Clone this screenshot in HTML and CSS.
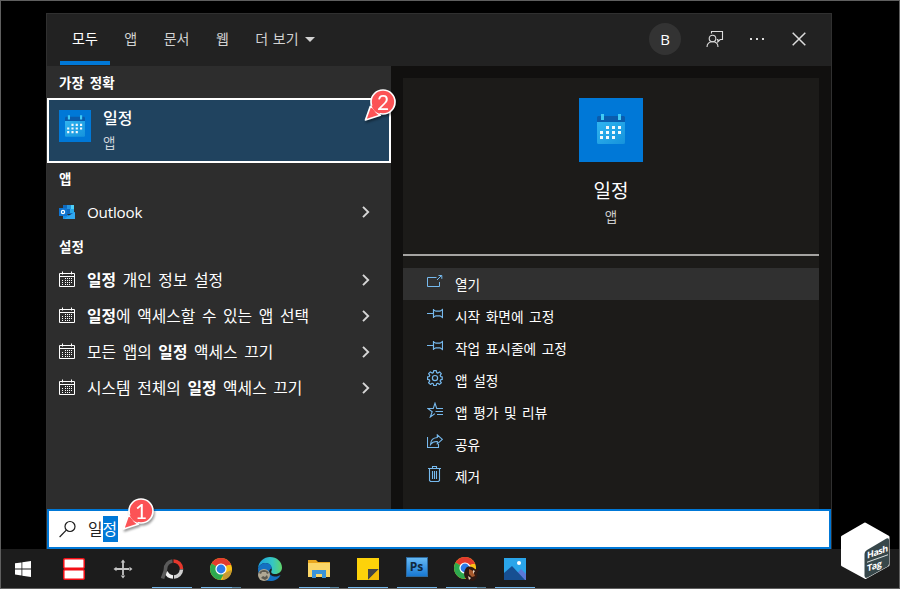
FILE: index.html
```html
<!DOCTYPE html>
<html lang="ko">
<head>
  <meta charset="UTF-8">
  <meta name="viewport" content="width=device-width, initial-scale=1.0">
  <title>일정</title>
  <link rel="stylesheet" href="styles.css">
</head>
<body>

<!-- Shared icons -->
<svg class="defs" width="0" height="0">
  <defs>
    <linearGradient id="calBody" x1="0" y1="0" x2="1" y2="1">
      <stop offset="0" stop-color="#30b4f0"/><stop offset="1" stop-color="#1593dc"/>
    </linearGradient>
    <linearGradient id="edgeTop" x1="0" y1="0" x2="1" y2="0">
      <stop offset="0" stop-color="#1ba0e0"/><stop offset="0.6" stop-color="#35c6c4"/><stop offset="1" stop-color="#5fd56b"/>
    </linearGradient>
    <symbol id="calApp" viewBox="0 0 28 30">
      <path d="M0 8h28v20.500a1.500 1.500 0 0 1-1.500 1.500h-25a1.500 1.500 0 0 1-1.500-1.500z" fill="url(#calBody)"/>
      <path d="M1 2h26l1 1v5H0V3z" fill="#0a5cad"/>
      <path d="M4 0h3v6H4zM21 0h3v6h-3z" fill="#3fcaf5"/>
      <path d="M9 12h3v3H9zM15 12h3v3h-3zM21 12h3v3h-3zM3 17h3v3H3zM9 17h3v3H9zM15 17h3v3h-3zM21 17h3v3h-3zM3 22h3v3H3zM9 22h3v3H9zM15 22h3v3h-3z" fill="#f3f8fb"/>
    </symbol>
    <symbol id="cal" viewBox="0 0 16 16">
      <path d="M.5 2.500h15v13H.5zM.5 5.500h15M3.500 0.500v3M12.500 .5v3" fill="none" stroke="#fff"/>
      <path d="M6 7h1v1H6zM8 7h1v1H8zM10 7h1v1h-1zM12 7h1v1h-1zM3 9h1v1H3zM6 9h1v1H6zM8 9h1v1H8zM10 9h1v1h-1zM12 9h1v1h-1zM3 11h1v1H3zM6 11h1v1H6zM8 11h1v1H8zM10 11h1v1h-1zM12 11h1v1h-1zM3 13h1v1H3zM6 13h1v1H6zM8 13h1v1H8zM10 13h1v1h-1z" fill="#fff"/>
    </symbol>
    <symbol id="chev" viewBox="0 0 8 12">
      <path d="M1 .8l5.200 5.200L1 11.200" fill="none" stroke="#d6d6d6" stroke-width="1.900"/>
    </symbol>
    <symbol id="pin" viewBox="0 0 16 16">
      <path d="M0 7.500h6M6.500 3v9M6.500 4l2.500 1.200h4l2.500-1.700v8L13 9.800H9L6.500 11" fill="none" stroke="#76b9ed" stroke-width="1.200"/>
    </symbol>
    <symbol id="chrome" viewBox="0 0 24 24">
      <circle cx="12" cy="12" r="11" fill="#fbc116"/>
      <path d="M12 12L2.500 6.500A11 11 0 0 1 21.500 6.500z" fill="#e33b2e"/>
      <path d="M2.500 6.500a11 11 0 0 0 9 16.500L16.300 14.500 12 12z" fill="#2da94f"/>
      <path d="M12 6.500h9.500l.5 1.500h-6z" fill="#e33b2e"/>
      <circle cx="12" cy="12" r="5.600" fill="#fff"/>
      <circle cx="12" cy="12" r="4.400" fill="#2d7bea"/>
    </symbol>
    <symbol id="marker" viewBox="0 0 36 36">
      <circle cx="22" cy="15" r="12" fill="#fc5356" stroke="#fff" stroke-width="1.700"/>
      <path d="M4.500 33L9.300 19.500l3 1.500 3 4 4 3.300z" fill="#fc5356" stroke="#fff" stroke-width="1.700" stroke-linejoin="round"/>
      <path d="M10.500 18.500a12 12 0 0 0 8 8.200l3-8z" fill="#fc5356"/>
    </symbol>
  </defs>
</svg>

<div class="screen">
  <div class="desktop">

    <!-- Search window -->
    <div class="search-window">
      <div class="header">
        <div class="tabs">
          <span class="tab active">모두</span>
          <span class="tab">앱</span>
          <span class="tab">문서</span>
          <span class="tab">웹</span>
          <span class="tab">더 보기<i class="caret"></i></span>
        </div>
        <div class="tools">
          <span class="avatar">B</span>
          <svg class="feedback" width="18" height="18" viewBox="0 0 18 18" fill="none" stroke="#dcdcdc" stroke-width="1.100">
            <path d="M5.500 3.500v-2h11v8h-2.300l-2.400 2.500V9.500h-1"/>
            <circle cx="6.500" cy="8.500" r="3.300"/>
            <path d="M1 17c0-3.300 2.200-5.200 5.500-5.200S12 13.700 12 17"/>
          </svg>
          <svg class="dots" width="16" height="4" viewBox="0 0 16 4" fill="#dcdcdc"><path d="M1 1h2v2H1zM7 1h2v2H7zM13 1h2v2h-2z"/></svg>
          <svg width="14" height="14" viewBox="0 0 14 14" stroke="#dcdcdc" stroke-width="1.500"><path d="M.7 .7l12.600 12.600M13.300 .7L.7 13.300"/></svg>
        </div>
      </div>

      <div class="panes">
        <!-- Results -->
        <div class="results">
          <h2 class="group">가장 정확</h2>
          <div class="best">
            <span class="tile"><svg width="20" height="22"><use href="#calApp"/></svg></span>
            <div class="best-text">
              <span class="best-name">일정</span>
              <span class="best-type">앱</span>
            </div>
          </div>

          <h2 class="group group-app">앱</h2>
          <div class="row">
            <svg width="16" height="16" viewBox="0 0 16 16">
              <path d="M4 1h11v9H4z" fill="#1069bd"/>
              <path d="M8 1h4v4H8z" fill="#2394df"/><path d="M12 1h3v4h-3z" fill="#4fd0f7"/><path d="M11 5h4v4h-4z" fill="#28a8ea"/>
              <path d="M4 8l6 3.500L16 8v7H4z" fill="#1b8fe6"/><path d="M16 8v7H5z" fill="#31a7f0"/>
              <path d="M0 4h8v8H0z" fill="#0f74d1"/>
              <circle cx="4" cy="8" r="1.600" fill="none" stroke="#fff" stroke-width="1.200"/>
            </svg>
            <span class="label latin">Outlook</span>
            <svg width="8" height="12"><use href="#chev"/></svg>
          </div>

          <h2 class="group">설정</h2>
          <div class="row">
            <svg class="row-icon" width="16" height="16"><use href="#cal"/></svg>
            <span class="label"><b>일정</b> 개인 정보 설정</span>
            <svg width="8" height="12"><use href="#chev"/></svg>
          </div>
          <div class="row">
            <svg class="row-icon" width="16" height="16"><use href="#cal"/></svg>
            <span class="label"><b>일정</b>에 액세스할 수 있는 앱 선택</span>
            <svg width="8" height="12"><use href="#chev"/></svg>
          </div>
          <div class="row">
            <svg class="row-icon" width="16" height="16"><use href="#cal"/></svg>
            <span class="label">모든 앱의 <b>일정</b> 액세스 끄기</span>
            <svg width="8" height="12"><use href="#chev"/></svg>
          </div>
          <div class="row">
            <svg class="row-icon" width="16" height="16"><use href="#cal"/></svg>
            <span class="label">시스템 전체의 <b>일정</b> 액세스 끄기</span>
            <svg width="8" height="12"><use href="#chev"/></svg>
          </div>
        </div>

        <!-- Details of the selected app -->
        <div class="details">
          <div class="hero">
            <span class="tile tile-big"><svg width="28" height="30"><use href="#calApp"/></svg></span>
            <span class="hero-name">일정</span>
            <span class="hero-type">앱</span>
          </div>
          <div class="actions">
            <div class="action hover">
              <svg width="16" height="16" viewBox="0 0 16 16" fill="none" stroke="#76b9ed"><path d="M9.500 3.500h-9v9h12V8M10 6l4.500-4.500M11.500 1.500h3.300v3.300"/></svg>
              <span>열기</span>
            </div>
            <div class="action">
              <svg width="16" height="16"><use href="#pin"/></svg>
              <span>시작 화면에 고정</span>
            </div>
            <div class="action">
              <svg width="16" height="16"><use href="#pin"/></svg>
              <span>작업 표시줄에 고정</span>
            </div>
            <div class="action">
              <svg width="16" height="16" viewBox="0 0 16 16" fill="none" stroke="#76b9ed" stroke-width="1.200" stroke-linejoin="round">
                <path d="M6.700 .6h2.600l.4 2 1.200.5 1.700-1.200 1.700 1.700-1.100 1.800.5 1.200 1.500.3v2.500l-1.600.4-.5 1.200 1.200 1.700-1.800 1.700-1.700-1.200-1.200.5-.4 1.800H6.700l-.4-1.800-1.200-.5-1.700 1.200-1.800-1.700L2.800 11l-.5-1.200L.6 9.400V6.900l1.700-.4.5-1.200-1.200-1.700L3.400 1.900l1.700 1.200 1.200-.5z"/>
                <circle cx="8" cy="8.100" r="2.600"/>
              </svg>
              <span>앱 설정</span>
            </div>
            <div class="action">
              <svg width="16" height="16" viewBox="0 0 16 16" fill="none" stroke="#76b9ed" stroke-width="1.100"><path d="M16 6.500H9.700L8 1.200 6.300 6.500H.8l4.400 3.200L3.300 15 8 11.600M8.500 9.500H16M10 12.500h6"/></svg>
              <span>앱 평가 및 리뷰</span>
            </div>
            <div class="action">
              <svg width="16" height="16" viewBox="0 0 16 16" fill="none" stroke="#76b9ed" stroke-width="1.100"><path d="M.5 3v10.500h11V10M10.300 .8l5 4.500-5 4.500V7.500C7 7.300 5 8.300 3.500 10.500c.2-4 2.500-6.700 6.800-7z"/></svg>
              <span>공유</span>
            </div>
            <div class="action">
              <svg width="16" height="16" viewBox="0 0 16 16" fill="none" stroke="#76b9ed" stroke-width="1.100"><path d="M1 2.500h13M5.500 2.500v-2h4v2M2.500 2.500v12l1 1h8l1-1v-12M5.500 5v8M7.500 5v8M9.500 5v8"/></svg>
              <span>제거</span>
            </div>
          </div>
        </div>
      </div>

      <!-- Search box -->
      <div class="search-box">
        <svg width="18" height="18" viewBox="0 0 18 18" fill="none" stroke="#1b1b1b" stroke-width="1.200"><circle cx="11" cy="6.500" r="5"/><path d="M7.300 10.200L.6 17"/></svg>
        <span class="query">일<mark>정</mark></span>
      </div>
    </div>

    <!-- Step markers -->
    <div class="marker marker-one"><svg width="36" height="36"><use href="#marker"/></svg><span>1</span></div>
    <div class="marker marker-two"><svg width="36" height="36"><use href="#marker"/></svg><span>2</span></div>
  </div>

  <!-- Taskbar -->
  <div class="taskbar">
    <div class="task start">
      <svg width="16" height="16" viewBox="0 0 16 16" fill="#fff"><path d="M0 2.300l6.500-.9v6H0zM7.300 1.300L16 0v7.400H7.300zM0 8.400h6.500v6L0 13.500zM7.300 8.400H16V16l-8.700-1.300z"/></svg>
    </div>
    <div class="task">
      <svg width="22" height="22" viewBox="0 0 22 22" fill="#fff" stroke="#f20d14" stroke-width="1.500"><rect x=".8" y=".8" width="20.400" height="9.400" rx="1"/><rect x=".8" y="11.800" width="20.400" height="9.400" rx="1"/></svg>
    </div>
    <div class="task">
      <svg width="20" height="20" viewBox="0 0 20 20" fill="#c4c4c4"><path d="M9.100 3h1.800v6.100H17v1.800h-6.100V17H9.100v-6.100H3V9.100h6.100zM10 .5l2.300 3H7.700zM10 19.500l2.300-3H7.700zM.5 10l3-2.300v4.600zM19.500 10l-3-2.300v4.600z"/></svg>
    </div>
    <div class="task open">
      <svg width="24" height="24" viewBox="0 0 24 24" fill="none" stroke-width="3.600">
        <path d="M13.500 4A8 8 0 0 1 21.500 12" stroke="#e5372c"/>
        <path d="M21.500 12.500a8 8 0 0 1-7.500 7.500" stroke="#cfcfcf"/>
        <path d="M13 20a8 8 0 0 1-7-5" stroke="#f0f0f0"/>
        <path d="M2.500 21.500C3.500 18 5.500 15 5.500 12A8 8 0 0 1 12.500 4" stroke="#5a5a5a"/>
      </svg>
    </div>
    <div class="task open many">
      <svg width="24" height="24" viewBox="0 0 24 24"><use href="#chrome"/><path d="M14 17l8-4c1 4-2 9-8 10z" fill="#c69a34"/></svg>
    </div>
    <div class="task">
      <svg width="26" height="26" viewBox="0 0 26 26">
        <path d="M1 12C2 5 7 1 13 1c7 0 12 5 12 10.500 0 4-3 6.500-7 6.500-3 0-4.500-1.500-3.500-3C16 12 13 7 8.500 7 5 7 2.500 9 1 12z" fill="url(#edgeTop)"/>
        <path d="M1 12c1.500-3 4-5 7.500-5C13 7 15 10 14.800 12.500 11 13 11 20 17.500 20.500c2.500.2 4.500-.5 6-1.500-2 4-6 6-10 6C6 25 .5 19 1 12z" fill="#1470c2"/>
        <circle cx="7" cy="19" r="6" fill="#b0a894"/>
        <path d="M2 17c2-4 8-4 10 0l-2 1-1-2H5l-1 2zM4 22l2-2 2 1 2-2 1 3-3 2z" fill="#5d5a50"/>
      </svg>
    </div>
    <div class="task open many">
      <svg width="22" height="20" viewBox="0 0 22 20"><path d="M0 1h8l2 2h12v15H0z" fill="#e9a71f"/><path d="M0 4h22v14H0z" fill="#fbd667"/><path d="M4 11h14v8h-4v-4H8v4H4z" fill="#3b93d8"/></svg>
    </div>
    <div class="task open">
      <svg width="22" height="22" viewBox="0 0 22 22"><path d="M0 0h22v22H0z" fill="#fdd20a"/><path d="M11 11h11L11 22z" fill="#444"/><path d="M22 11v11H11z" fill="#f4bd06"/></svg>
    </div>
    <div class="task open">
      <span class="ps">Ps</span>
    </div>
    <div class="task open many">
      <svg width="26" height="26" viewBox="0 0 26 26"><use href="#chrome" x="0" y="0" width="24" height="24"/><path d="M13 12c3-3 7-1 9 1l4 1-2 3c1 4-2 8-4 8s-4-1-7-2c-3-4-2-8 0-11z" fill="#301912"/><path d="M16 13l4 2 2 5-3 1-3-3z" fill="#a7592d"/><path d="M20 14l2 1-2 3zM15 20l3 2-2 2z" fill="#e6d3bd"/></svg>
    </div>
    <div class="task open">
      <svg width="22" height="22" viewBox="0 0 22 22"><path d="M0 0h22v22H0z" fill="#2aa5ea"/><path d="M10 19l7-8 5 5v6H10z" fill="#5a78d8"/><path d="M0 15L8 8l13 14H0z" fill="#174f92"/><circle cx="15" cy="5" r="2" fill="#fff"/></svg>
    </div>
  </div>

  <!-- Channel logo -->
  <div class="logo">
    <svg width="52" height="60" viewBox="0 0 52 60">
      <path d="M25 3L48 16v28L25.500 56.500 2.500 44V16z" fill="#fff" stroke="#fff" stroke-width="3" stroke-linejoin="round"/>
      <path d="M27 29l19.500-11.500q2.500-1 2.500 1.500v23.500q0 2-1.500 3L27.500 56.500q-3 1.500-3-2V33q0-2.500 2.500-4z" fill="#37474a"/>
    </svg>
    <div class="logo-text">
      <span class="logo-top">Hash</span>
      <span>Tag</span>
    </div>
  </div>
</div>

</body>
</html>
```
FILE: styles.css
```css
* {
  box-sizing: border-box;
}

body {
  margin: 0;
  background-color: #000;
  font-family: "Open Sans", "Noto Sans CJK KR", sans-serif;
  color: #fff;
}

.defs {
  position: absolute;
}

svg {
  flex: none;
}

.screen {
  position: relative;
  width: 900px;
  height: 589px;
  border: 1px solid #5f5f5f;
  overflow: hidden;
}

.desktop {
  height: 548px;
  padding: 12px 0 0 45px;
}

/* Search window */
.search-window {
  width: 786px;
  height: 536px;
  border: 1px solid #303030;
  border-bottom: none;
  display: flex;
  flex-direction: column;
}

.header {
  height: 52px;
  background-color: #222;
  display: flex;
  justify-content: space-between;
}

.tabs {
  display: flex;
  gap: 2.500px;
  padding-left: 13px;
}

.tab {
  display: flex;
  align-items: center;
  height: 51px;
  padding: 0 12px 3px;
  font-size: 14px;
  word-spacing: 1px;
  color: #d2d2d2;
}

.tab.active {
  color: #fff;
  border-bottom: 4px solid #0078d7;
  padding: 1px 12px 0;
}

.caret {
  margin: 3px 0 0 6px;
  border: 5px solid transparent;
  border-top-color: #d2d2d2;
  border-bottom: none;
}

.tools {
  display: flex;
  align-items: center;
  padding: 0 25px 2px 0;
}

.avatar {
  width: 32px;
  height: 32px;
  border-radius: 50%;
  background-color: #333;
  display: flex;
  align-items: center;
  justify-content: center;
  font-size: 15px;
}

.feedback {
  margin-left: 25px;
}

.dots {
  margin: 0 27px 0 25px;
}

.panes {
  flex: 1;
  display: flex;
  min-height: 0;
}

/* Results */
.results {
  width: 344px;
  background-color: #2d2d2d;
}

.group {
  display: flex;
  align-items: center;
  height: 32px;
  margin: 0;
  padding: 0 0 0 12px;
  font-size: 13.500px;
  font-weight: 700;
  word-spacing: 2.500px;
}

.group-app {
  height: 31px;
  padding-bottom: 2px;
}

.best {
  display: flex;
  height: 65px;
  border: 2px solid #fff;
  background-color: #20435f;
  padding: 10px;
}

.tile {
  display: flex;
  align-items: center;
  justify-content: center;
  width: 32px;
  height: 32px;
  background-color: #0078d7;
}

.best-text {
  display: flex;
  flex-direction: column;
  margin: -4px 0 0 12px;
}

.best-name {
  font-size: 16px;
  font-weight: 500;
  line-height: 25px;
}

.best-type {
  font-size: 13.500px;
  line-height: 24px;
  color: #ccd4da;
}

.row {
  display: flex;
  align-items: center;
  height: 36px;
  padding: 0 21px 0 12px;
}

.row-icon {
  margin-bottom: 2px;
}

.label {
  flex: 1;
  margin-left: 12px;
  padding-bottom: 2px;
  font-size: 15.800px;
  word-spacing: 2.500px;
  white-space: nowrap;
}

.latin {
  padding-bottom: 0;
  font-size: 15.200px;
  letter-spacing: -0.2px;
}

/* Details */
.details {
  flex: 1;
  padding: 12px 12px 0;
  background-color: #11100f;
  display: flex;
  flex-direction: column;
}

.hero {
  display: flex;
  flex-direction: column;
  align-items: center;
  height: 178px;
  padding-top: 20px;
  border-bottom: 2px solid #a5a4a2;
  background-color: #1c1b19;
}

.tile-big {
  width: 64px;
  height: 64px;
}

.tile-big svg {
  margin-bottom: 2px;
}

.hero-name {
  margin-top: 15px;
  font-size: 19px;
  line-height: 28px;
}

.hero-type {
  font-size: 13.500px;
  line-height: 24px;
  color: #ccc;
}

.actions {
  flex: 1;
  padding-top: 12px;
  background-color: #1c1b19;
}

.action {
  display: flex;
  align-items: center;
  height: 32px;
  padding-left: 24px;
  font-size: 13.700px;
  word-spacing: 2px;
}

.action svg {
  margin: 0 12px 4px 0;
}

.action.hover {
  background-color: #303030;
}

/* Search box */
.search-box {
  height: 40px;
  border: 2px solid #0078d7;
  background-color: #fff;
  display: flex;
  align-items: center;
  padding-left: 10px;
}

.query {
  margin-left: 11px;
  padding-bottom: 1px;
  font-size: 15.800px;
  line-height: 26px;
  color: #222;
  display: flex;
}

.query mark {
  background-color: #0078d7;
  color: #fff;
  padding-right: 1px;
}

/* Step markers */
.marker {
  position: absolute;
  width: 36px;
  height: 36px;
  filter: drop-shadow(1px 2px 1px rgba(0, 0, 0, 0.4));
}

.marker-one {
  left: 118px;
  top: 495px;
}

.marker-two {
  left: 360px;
  top: 86px;
}

.marker span {
  position: absolute;
  left: 10px;
  top: 3px;
  width: 24px;
  text-align: center;
  font-family: Lato, sans-serif;
  font-size: 21px;
  line-height: 24px;
}

/* Taskbar */
.taskbar {
  display: flex;
  height: 39px;
  background-color: #1c1c1c;
}

.task {
  position: relative;
  width: 49px;
  display: flex;
  align-items: center;
  justify-content: center;
}

.start {
  width: 48px;
  padding-right: 4px;
}

.open::after {
  content: "";
  position: absolute;
  left: 5px;
  bottom: 0;
  width: 40px;
  height: 1px;
  background-color: #76b9ed;
}

.many::after {
  background: linear-gradient(to right, #76b9ed 31px, #56839f 31px);
}

.ps {
  width: 22px;
  height: 20px;
  margin-bottom: 3px;
  background: linear-gradient(#65b9f5, #1878d2);
  border: 1px solid #2d6a9f;
  color: #10283d;
  font-size: 12px;
  font-weight: 700;
  line-height: 18px;
  text-align: center;
}

/* Logo */
.logo {
  position: absolute;
  left: 839px;
  top: 520px;
  width: 52px;
  height: 60px;
}

.logo-text {
  position: absolute;
  left: 27px;
  top: 25px;
  display: flex;
  flex-direction: column;
  align-items: flex-start;
  font-size: 9px;
  font-weight: 700;
  line-height: 12px;
  letter-spacing: -0.5px;
  transform: skewY(-20deg);
}

.logo-top {
  border-bottom: 1px solid #dfe3e3;
}
```
